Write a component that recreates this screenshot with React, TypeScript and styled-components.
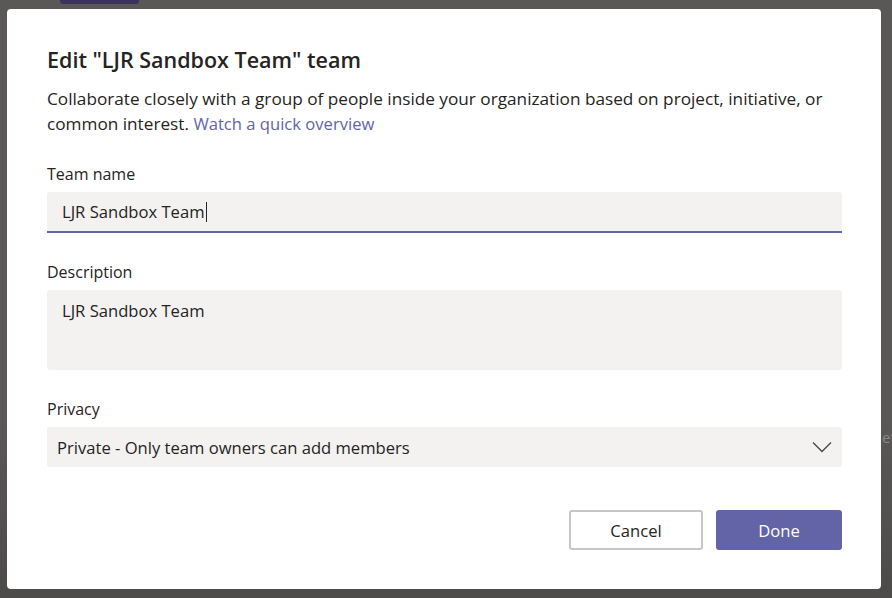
import { FC } from 'react';
import styled, { createGlobalStyle } from 'styled-components';

const GlobalStyle = createGlobalStyle`
  html, body {
    margin: 0;
    padding: 0;
    background: #595856;
  }
  body {
    font-family: 'Open Sans', 'Noto Sans', sans-serif;
    color: #252423;
  }
`;

const Chevron: FC = () => (
  <svg width="20" height="12" viewBox="0 0 20 12" fill="none">
    <path d="M1 1.5 L10 10.5 L19 1.5" stroke="#484644" strokeWidth="1.3" />
  </svg>
);

const App: FC = () => {
  return (
    <>
      <GlobalStyle />
      <Backdrop>
        <AppTab />
        <BehindText>et</BehindText>
        <Dialog>
          <Title>Edit "LJR Sandbox Team" team</Title>
          <Intro>
            Collaborate closely with a group of people inside your organization based on project, initiative, or
            common interest. <Link href="#">Watch a quick overview</Link>
          </Intro>

          <Field $gap={26}>
            <Label>Team name</Label>
            <TextInput>
              LJR Sandbox Team
              <Caret />
            </TextInput>
          </Field>

          <Field $gap={27}>
            <Label>Description</Label>
            <TextArea>LJR Sandbox Team</TextArea>
          </Field>

          <Field $gap={27}>
            <Label>Privacy</Label>
            <Select>
              <span>Private - Only team owners can add members</span>
              <Chevron />
            </Select>
          </Field>

          <Footer>
            <Button $variant="secondary">Cancel</Button>
            <Button $variant="primary">Done</Button>
          </Footer>
        </Dialog>
      </Backdrop>
    </>
  );
};

export default App;

const Backdrop = styled.div`
  position: relative;
  width: 892px;
  height: 598px;
  overflow: hidden;
  background: linear-gradient(180deg, #5a5856 0%, #595856 70%, #4c4b4a 100%);
  padding: 9px 0 0 7px;
  box-sizing: border-box;
`;

const AppTab = styled.div`
  position: absolute;
  left: 60px;
  top: -4px;
  width: 79px;
  height: 8px;
  border-radius: 3px;
  background: #3a335f;
`;

const BehindText = styled.span`
  position: absolute;
  left: 882px;
  top: 427px;
  font-size: 15px;
  color: #8a8886;
`;

const Dialog = styled.div`
  position: relative;
  width: 874px;
  height: 580px;
  box-sizing: border-box;
  background: #ffffff;
  border-radius: 4px;
  padding: 37px 39px 0 40px;
  display: flex;
  flex-direction: column;
`;

const Title = styled.h1`
  margin: 0;
  font-size: 21.5px;
  font-weight: 600;
  line-height: 28px;
  color: #252423;
`;

const Intro = styled.p`
  margin: 12px 0 0 0;
  font-size: 17.2px;
  line-height: 25px;
  color: #252423;
`;

const Link = styled.a`
  color: #6264a7;
  text-decoration: none;
  font-size: 16.6px;
`;

const Field = styled.div<{ $gap: number }>`
  display: flex;
  flex-direction: column;
  margin-top: ${({ $gap }) => $gap}px;
`;

const Label = styled.label`
  font-size: 16px;
  line-height: 24px;
  margin-bottom: 6px;
`;

const TextInput = styled.div`
  display: flex;
  align-items: center;
  height: 41px;
  box-sizing: border-box;
  padding: 0 15px;
  background: #f3f2f1;
  border-radius: 3px 3px 0 0;
  border-bottom: 2px solid #6264a7;
  font-size: 16.6px;
`;

const Caret = styled.span`
  display: inline-block;
  width: 1px;
  height: 20px;
  margin-left: 1px;
  background: #252423;
`;

const TextArea = styled.div`
  height: 80px;
  box-sizing: border-box;
  padding: 10px 15px;
  background: #f3f2f1;
  border-radius: 3px;
  font-size: 16.6px;
  line-height: 22px;
`;

const Select = styled.div`
  display: flex;
  align-items: center;
  justify-content: space-between;
  height: 40px;
  box-sizing: border-box;
  padding: 0 10px;
  background: #f3f2f1;
  border-radius: 3px;
  font-size: 16.6px;
`;

const Footer = styled.div`
  display: flex;
  justify-content: flex-end;
  gap: 13px;
  margin-top: 43px;
`;

const Button = styled.button<{ $variant: 'primary' | 'secondary' }>`
  height: 40px;
  min-width: 126px;
  padding: 0 20px;
  border-radius: 3px;
  font-family: inherit;
  font-size: 16.6px;
  cursor: pointer;
  box-sizing: border-box;
  ${({ $variant }) =>
    $variant === 'primary'
      ? `
    background: #6264a7;
    border: none;
    color: #ffffff;
  `
      : `
    width: 134px;
    background: #ffffff;
    border: 2px solid #c8c6c4;
    color: #252423;
  `}
`;
